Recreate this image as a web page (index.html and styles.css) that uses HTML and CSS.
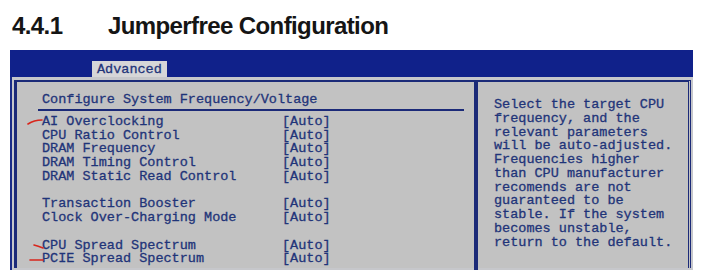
FILE: index.html
```html
<!DOCTYPE html>
<html lang="en">
<head>
  <meta charset="UTF-8">
  <title>Jumperfree Configuration</title>
  <link rel="stylesheet" href="styles.css">
</head>
<body>
  <h1 class="title"><span class="title-num">4.4.1</span>Jumperfree Configuration</h1>

  <div class="bios">
    <div class="topbar">
      <span class="tab">Advanced</span>
    </div>

    <div class="screen">
      <div class="panels">
        <div class="left">
          <div class="section-head">Configure System Frequency/Voltage</div>

          <div class="group">
            <div class="row">
              <svg class="mark mark-ai" width="16" height="6" viewBox="0 0 16 6"><path d="M1 5 Q7 1 15 1" /></svg>
              <span class="name">AI Overclocking</span><span class="value">[Auto]</span>
            </div>
            <div class="row"><span class="name">CPU Ratio Control</span><span class="value">[Auto]</span></div>
            <div class="row"><span class="name">DRAM Frequency</span><span class="value">[Auto]</span></div>
            <div class="row"><span class="name">DRAM Timing Control</span><span class="value">[Auto]</span></div>
            <div class="row"><span class="name">DRAM Static Read Control</span><span class="value">[Auto]</span></div>
          </div>

          <div class="group">
            <div class="row"><span class="name">Transaction Booster</span><span class="value">[Auto]</span></div>
            <div class="row"><span class="name">Clock Over-Charging Mode</span><span class="value">[Auto]</span></div>
          </div>

          <div class="group">
            <div class="row">
              <svg class="mark mark-cpu" width="11" height="6" viewBox="0 0 11 6"><path d="M1 1 Q5 2 10 4" /></svg>
              <span class="name">CPU Spread Spectrum</span><span class="value">[Auto]</span>
            </div>
            <div class="row">
              <svg class="mark mark-pcie" width="15" height="4" viewBox="0 0 15 4"><path d="M1 2 L14 2" /></svg>
              <span class="name">PCIE Spread Spectrum</span><span class="value">[Auto]</span>
            </div>
          </div>
        </div>

        <div class="right">
          <p class="help">Select the target CPU
frequency, and the
relevant parameters
will be auto-adjusted.
Frequencies higher
than CPU manufacturer
recomends are not
guaranteed to be
stable. If the system
becomes unstable,
return to the default.</p>
        </div>
      </div>
    </div>
  </div>
</body>
</html>
```

FILE: styles.css
```css
body {
  margin: 0;
  background-color: #ffffff;
}

.title {
  margin: 0;
  padding: 11px 0 0 12px;
  font-family: 'Liberation Sans', Arial, sans-serif;
  font-weight: bold;
  font-size: 24px;
  letter-spacing: -0.6px;
  line-height: 30px;
  color: #151515;
}

.title-num {
  display: inline-block;
  width: 96px;
}

.bios {
  margin: 9px 0 0 10px;
  width: 683px;
  font-family: 'Liberation Mono', 'Courier New', monospace;
  font-size: 13.5px;
  line-height: 13.75px;
  color: #1f3479;
  -webkit-text-stroke: 0.3px #1f3479;
}

.topbar {
  display: flex;
  align-items: flex-end;
  height: 27px;
  padding-left: 82px;
  background-color: #10218a;
}

.tab {
  display: block;
  height: 15px;
  padding: 1px 5px 0 5px;
  background-color: #d6d6d8;
  line-height: 15px;
}

.screen {
  background-color: #c6c7cb;
  border-left: 2px solid #1a2c88;
  padding: 3px 2px 2px 2px;
}

.panels {
  display: grid;
  grid-template-columns: 457px 1fr;
  height: 186px;
  border-top: 2px solid #1b2a78;
  border-left: 3px solid #1b2a78;
  border-right: 3px double #1b2a78;
  background-color: #c2c2c2;
}

.left {
  padding-top: 11px;
}

.section-head {
  margin: 0 10px 4px 21px;
  padding: 0 0 2px 4px;
  border-bottom: 2px solid #1b2a78;
}

.group {
  padding-left: 25px;
  margin-bottom: 13.75px;
}

.row {
  position: relative;
  display: flex;
  height: 13.75px;
}

.name {
  width: 240px;
}

.mark {
  position: absolute;
  fill: none;
  stroke: #d8261c;
  stroke-width: 1.6;
  stroke-linecap: round;
  -webkit-text-stroke: 0;
}

.mark-ai {
  left: -15px;
  top: 4px;
}

.mark-cpu {
  left: -9px;
  top: 5px;
}

.mark-pcie {
  left: -13px;
  top: 6px;
}

.right {
  border-left: 4px solid #1b2a78;
  padding: 16px 0 0 16px;
}

.help {
  margin: 0;
  white-space: pre;
  font-family: inherit;
}
```
